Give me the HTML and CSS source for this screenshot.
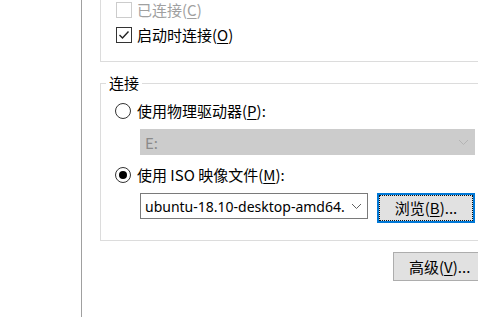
FILE: index.html
```html
<!DOCTYPE html>
<html lang="zh-CN">
<head>
<meta charset="utf-8">
<title>CD/DVD 驱动器</title>
<link rel="stylesheet" href="styles.css">
</head>
<body>
<div class="window">
  <div class="list"></div>
  <div class="main">
    <div class="group-top">
      <div class="check disabled">
        <span class="box"></span>
        <span class="label">已连接(<u>C</u>)</span>
      </div>
      <div class="check">
        <span class="box">
          <svg width="14" height="14" viewBox="0 0 14 14"><polyline points="2.5,7 5.5,10 11.5,3.5" fill="none" stroke="#222" stroke-width="1.4"/></svg>
        </span>
        <span class="label">启动时连接(<u>O</u>)</span>
      </div>
    </div>
    <fieldset class="group">
      <legend>连接</legend>
      <div class="radio-row first">
        <span class="radio"></span>
        <span class="label">使用物理驱动器(<u>P</u>):</span>
      </div>
      <div class="combo disabled wide">
        <span class="combo-text">E:</span>
        <svg class="arrow" width="11" height="7" viewBox="0 0 11 7"><polyline points="1,1 5.5,5.5 10,1" fill="none" stroke="#b4b4b4" stroke-width="1"/></svg>
      </div>
      <div class="radio-row second">
        <span class="radio on"></span>
        <span class="label">使用 ISO 映像文件(<u>M</u>):</span>
      </div>
      <div class="iso-row">
        <div class="combo iso">
          <span class="combo-text">ubuntu-18.10-desktop-amd64.</span>
          <svg class="arrow" width="11" height="7" viewBox="0 0 11 7"><polyline points="1,1 5.5,5.5 10,1" fill="none" stroke="#606060" stroke-width="1"/></svg>
        </div>
        <button class="btn default">浏览(<u>B</u>)...</button>
      </div>
    </fieldset>
    <div class="actions">
      <button class="btn advanced">高级(<u>V</u>)...</button>
    </div>
  </div>
</div>
</body>
</html>
```
FILE: styles.css
```css
* { box-sizing: border-box; }
html, body { margin: 0; padding: 0; }
body {
  width: 478px;
  height: 317px;
  overflow: hidden;
  background: #ffffff;
  font-family: "Noto Sans CJK SC", "Noto Sans", sans-serif;
  font-size: 15px;
  color: #000;
}
u { text-decoration-thickness: 1px; text-underline-offset: 2px; }

.window { display: flex; height: 317px; }
.list { flex: none; width: 82px; border-right: 1px solid #a0a0a0; }
.main { flex: none; width: 390px; margin-left: 18px; }

.group-top {
  height: 62px;
  border-left: 1px solid #dcdcdc;
  border-bottom: 1px solid #dcdcdc;
  padding: 2px 0 0 15px;
  display: flex;
  flex-direction: column;
  gap: 9px;
}
.check { display: flex; align-items: center; height: 16px; gap: 5px; line-height: 16px; }
.check .box {
  width: 16px; height: 16px; flex: none;
  border: 1px solid #333;
  background: #fff;
  display: flex; align-items: center; justify-content: center;
}
.check.disabled .box { border-color: #cccccc; }
.check.disabled .label { color: #a0a0a0; }
.label { white-space: nowrap; }

.group {
  margin: 11px 0 0 0;
  padding: 0 0 17px 0;
  border: 1px solid #dcdcdc;
  min-width: 0;
}
.group legend {
  margin-left: 5px;
  padding: 0 3px;
  line-height: 20px;
  height: 20px;
}
.radio-row {
  display: flex; align-items: center;
  height: 20px; gap: 6px;
  padding-left: 14px;
  line-height: 20px;
}
.radio-row.first { margin-top: 8px; }
.radio-row.second { margin-top: 10px; }
.radio {
  position: relative;
  width: 16px; height: 16px; flex: none;
  border: 1px solid #333;
  border-radius: 50%;
  background: #fff;
}
.radio.on::after {
  content: "";
  position: absolute;
  inset: 3px;
  border-radius: 50%;
  background: #000;
}

.combo {
  height: 26px;
  display: flex; align-items: center;
  padding: 0 5px 0 4px;
  white-space: nowrap;
  overflow: hidden;
}
.combo-text { flex: 1; min-width: 0; overflow: hidden; }
.combo.wide {
  margin: 8px 0 0 39px;
  width: 335px;
  background: #cccccc;
  border: 1px solid #cccccc;
  color: #8a8a8a;
}
.combo.iso {
  width: 228px;
  flex: none;
  background: #fff;
  border: 1px solid #7a7a7a;
}
.combo.iso .combo-text {
  font-family: "Noto Sans", "Noto Sans CJK SC", sans-serif;
  font-size: 14px;
}
.arrow { flex: none; }

.iso-row {
  display: flex; align-items: flex-start; gap: 9px;
  margin-top: 8px;
  padding-left: 39px;
}

.btn {
  font: inherit;
  color: #000;
  background: #e1e1e1;
  border: 1px solid #adadad;
  padding: 0;
  margin: 0;
  line-height: 20px;
  white-space: nowrap;
}
.btn.default {
  width: 98px; height: 30px; flex: none;
  border-color: #0078d7;
  box-shadow: inset 0 0 0 1px #0078d7;
  outline: 1px dotted #111;
  outline-offset: -3px;
}
.actions { margin-top: 11px; padding-left: 293px; display: flex; }
.btn.advanced {
  width: 97px; height: 29px;
  text-align: left;
  padding-left: 15px;
}
```
